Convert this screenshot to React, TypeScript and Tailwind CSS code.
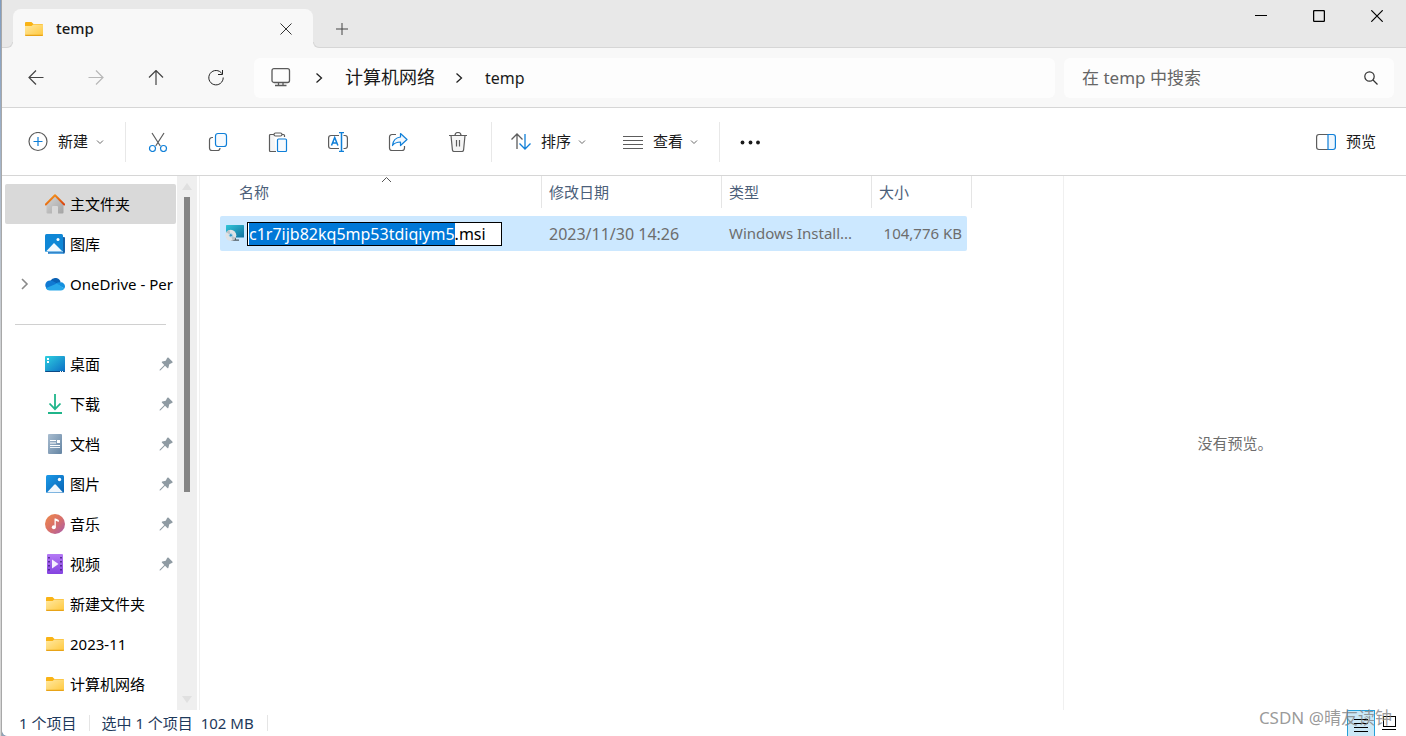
import React, { useEffect, useRef, useState } from 'react';

const FolderIcon = () => (
  <svg width="20" height="20" viewBox="0 0 20 20">
    <defs>
      <linearGradient id="folder" x1="0" y1="0" x2="1" y2="1">
        <stop offset="0" stopColor="#ffe9a3" />
        <stop offset="1" stopColor="#ffc83d" />
      </linearGradient>
    </defs>
    <path d="M1 4a1 1 0 0 1 1-1h5.500l2 2H18a1 1 0 0 1 1 1v5H1z" fill="#f9b316" />
    <path d="M1 7h6.500l1.800-1.500H19V16a1 1 0 0 1-1 1H2a1 1 0 0 1-1-1z" fill="url(#folder)" />
    <path d="M1 15.700V16a1 1 0 0 0 1 1h16a1 1 0 0 0 1-1v-.3z" fill="#e8a317" />
  </svg>
);

const HomeIcon = () => (
  <svg width="20" height="20" viewBox="0 0 20 20">
    <defs>
      <linearGradient id="homeBody" x1="0" y1="0" x2="1" y2="1">
        <stop offset="0" stopColor="#d6d6d6" />
        <stop offset="1" stopColor="#a3a3a3" />
      </linearGradient>
      <linearGradient id="homeRoof" x1="0" y1="0" x2="1" y2="1">
        <stop offset="0" stopColor="#f9a01b" />
        <stop offset="1" stopColor="#d8410f" />
      </linearGradient>
    </defs>
    <path d="M10 1.500 1.500 10v8.500a1 1 0 0 0 1 1H7V13a1 1 0 0 1 1-1h4a1 1 0 0 1 1 1v6.500h4.500a1 1 0 0 0 1-1V10z" fill="url(#homeBody)" />
    <path d="M.8 10.500 10 1.300l9.200 9.200" fill="none" stroke="url(#homeRoof)" strokeWidth="2" strokeLinejoin="round" strokeLinecap="round" />
  </svg>
);

const GalleryIcon = () => (
  <svg width="20" height="20" viewBox="0 0 20 20">
    <path d="M3 5v14a1 1 0 0 0 1 1h14a2 2 0 0 0 2-2V4a1 1 0 0 0-1-1z" fill="#1561a8" />
    <path d="M18 3v15H3v-1h14V3z" fill="#fff" />
    <path d="M3 18.500h15l1 1.500H5a2 2 0 0 1-2-1.500z" fill="#58a9e6" />
    <rect width="18" height="18" rx="1.500" fill="#0f87d6" />
    <path d="M1 17.500 9 9l8.500 8.500z" fill="#f2f8fd" />
    <circle cx="13" cy="5.500" r="1.500" fill="#fff" />
  </svg>
);

const CloudIcon = () => (
  <svg width="20" height="20" viewBox="0 0 20 20">
    <path d="M5.500 6.500a5.600 5.600 0 0 1 10.200 2L11 12z" fill="#0b62b5" />
    <path d="M5.500 6.400a4.600 4.600 0 0 1 3 1l5.500 3-8 5.600H4.700A4.800 4.800 0 0 1 5.500 6.400z" fill="#1079d2" />
    <path d="M10.500 9.700a5.300 5.300 0 0 1 5-1.300 4 4 0 0 1 4.500 4 3.900 3.900 0 0 1-.6 2z" fill="#1490df" />
    <path d="m11.800 9.400 7.600 5A3.800 3.800 0 0 1 16 16.500H4.700a4.600 4.600 0 0 1-3.900-2.300z" fill="#28a8ea" />
  </svg>
);

const DesktopIcon = () => (
  <svg width="20" height="20" viewBox="0 0 20 20">
    <defs>
      <linearGradient id="desktop" x1="0" y1="0" x2="1" y2="1">
        <stop offset="0" stopColor="#2fd0e0" />
        <stop offset="1" stopColor="#0b6cc4" />
      </linearGradient>
    </defs>
    <rect y="2" width="20" height="16" rx="1" fill="url(#desktop)" />
    <path d="M0 17h20a1 1 0 0 1-1 1H1a1 1 0 0 1-1-1z" fill="#0c4a86" />
    <path d="M2 4h2v2H2zM2 7h2v2H2zM15 17h1v1h-1zM17 17h1v1h-1z" fill="#fff" />
  </svg>
);

const DownloadIcon = () => (
  <svg width="20" height="20" viewBox="0 0 20 20" fill="none" stroke="#1fb58a" strokeWidth="1.800">
    <path d="M10 0v15M4.500 9.500 10 15.200l5.500-5.700M3 19h14" />
  </svg>
);

const DocumentIcon = () => (
  <svg width="20" height="20" viewBox="0 0 20 20">
    <defs>
      <linearGradient id="doc" x1="0" y1="0" x2="1" y2="1">
        <stop offset="0" stopColor="#a9bdd0" />
        <stop offset="1" stopColor="#6484a3" />
      </linearGradient>
    </defs>
    <rect x="3" width="14" height="20" rx="1" fill="url(#doc)" />
    <path d="M5 6h6v1H5zM5 8.500h6v1H5zM12 6h3v3h-3zM5 11h10v1H5z" fill="#fff" />
    <path d="M5 13h10v1H5z" fill="#eef3f7" />
  </svg>
);

const PicturesIcon = () => (
  <svg width="20" height="20" viewBox="0 0 20 20">
    <defs>
      <linearGradient id="pics" x1="0" y1="0" x2="1" y2="1">
        <stop offset="0" stopColor="#1c9ae8" />
        <stop offset="1" stopColor="#0863b4" />
      </linearGradient>
    </defs>
    <rect x="1" y="1" width="18" height="18" rx="1.500" fill="url(#pics)" />
    <path d="M2 18.500 9.200 10.800a1.200 1.200 0 0 1 1.700 0L18 18.500z" fill="#f0f7fd" />
    <circle cx="14.500" cy="5.500" r="1.700" fill="#fff" />
  </svg>
);

const MusicIcon = () => (
  <svg width="20" height="20" viewBox="0 0 20 20">
    <defs>
      <linearGradient id="music" x1="0" y1="0" x2="1" y2="1">
        <stop offset="0" stopColor="#ee8a4a" />
        <stop offset="0.500" stopColor="#d97068" />
        <stop offset="1" stopColor="#a75cae" />
      </linearGradient>
    </defs>
    <circle cx="10" cy="10" r="10" fill="url(#music)" />
    <circle cx="8.800" cy="13.200" r="2" fill="#fff" />
    <path d="M9.500 13.200V4.500h1.300l3 1.600V8l-3-1.200v6.400z" fill="#fff" />
  </svg>
);

const VideoIcon = () => (
  <svg width="20" height="20" viewBox="0 0 20 20">
    <defs>
      <linearGradient id="video" x1="0" y1="0" x2="0" y2="1">
        <stop offset="0" stopColor="#b57af5" />
        <stop offset="1" stopColor="#8442e0" />
      </linearGradient>
    </defs>
    <rect x="2" width="16" height="20" rx="1" fill="url(#video)" />
    <path d="M4 3v15M16 3v15" stroke="#3e1a78" strokeWidth="1.500" strokeDasharray="1.500 2.500" />
    <path d="M7 5.500v9l6.500-4.500z" fill="#f6f0fe" />
  </svg>
);

const PinIcon = () => (
  <svg width="14" height="14" viewBox="0 0 14 14" fill="#8f9ba3">
    <path d="M8 1.200C8.300.4 9 .2 9.600.8l3.700 3.600c.6.6.4 1.300-.4 1.600l-2.600 1.300-.9 3.400c-.2.600-.7.700-1.100.3L6 8.700l-4.700 4.700H.6v-.7L5.300 8 3 5.700c-.4-.4-.3-.9.3-1.100l3.400-.9z" />
  </svg>
);

const InstallerIcon = () => (
  <svg width="20" height="20" viewBox="0 0 20 20">
    <defs>
      <linearGradient id="screen" x1="0" y1="0" x2="1" y2="1">
        <stop offset="0" stopColor="#33c6d8" />
        <stop offset="1" stopColor="#0f6f9f" />
      </linearGradient>
    </defs>
    <rect x="1" y="1" width="18" height="12.500" rx=".5" fill="url(#screen)" />
    <path d="M8 13.500h3v2h3v1.300H6z" fill="#4d5a62" />
    <circle cx="5.800" cy="11.300" r="5.500" fill="#dfe2e5" />
    <path d="M5.800 11.300 1.300 8.300A5.500 5.500 0 0 1 4.300 6zM5.800 11.300l4.800 2.500a5.500 5.500 0 0 1-3 2.700z" fill="#bcc2c7" />
    <circle cx="5.800" cy="11.300" r="1.700" fill="#3296c8" stroke="#b4dcee" />
  </svg>
);

const Caret = () => (
  <svg width="8" height="6" viewBox="0 0 8 6" fill="none" stroke="#6b6b6b">
    <path d="M1 1.500 4 4.500l3-3" />
  </svg>
);

const CrumbArrow = () => (
  <svg width="8" height="12" viewBox="0 0 8 12" fill="none" stroke="#222" strokeWidth="1.300">
    <path d="m1.500 1.500 5 4.500-5 4.500" />
  </svg>
);

// stroke colours of the command bar icons
const ink = '#5c5c5c';
const blue = '#0f7fd8';

const actions = [
  {
    label: '剪切',
    icon: (
      <>
        <path d="M4 1l8.300 13M16 1 7.700 14" stroke={ink} />
        <circle cx="4.500" cy="16.500" r="3" stroke={blue} />
        <circle cx="15.500" cy="16.500" r="3" stroke={blue} />
      </>
    ),
  },
  {
    label: '复制',
    icon: (
      <>
        <path d="M5 5.500H4A2.500 2.500 0 0 0 1.500 8v8A2.500 2.500 0 0 0 4 18.500h5.500A2.500 2.500 0 0 0 12 16" stroke={ink} />
        <rect x="7.500" y="1.500" width="11" height="13" rx="2.500" fill="#f6fafe" stroke={blue} />
      </>
    ),
  },
  {
    label: '粘贴',
    icon: (
      <>
        <path d="M6 2.500H2.500a1 1 0 0 0-1 1v15a1 1 0 0 0 1 1H8M14 2.500h1.500a1 1 0 0 1 1 1V5" fill="#f5f5f5" stroke={ink} />
        <rect x="6" y="1" width="8" height="3" rx="1.500" fill="#fff" stroke={ink} />
        <rect x="9.500" y="7" width="9" height="12.500" rx="1" fill="#f6fafe" stroke={blue} />
      </>
    ),
  },
  {
    label: '重命名',
    icon: (
      <>
        <path d="M11 3.500H3A2.500 2.500 0 0 0 .6 6v8A2.500 2.500 0 0 0 3 16.500h8M15.500 3.500H17A2.500 2.500 0 0 1 19.400 6v8a2.500 2.500 0 0 1-2.400 2.500h-1.500" stroke={ink} />
        <path d="m3.500 13.500 3.200-8 3.200 8M4.700 11h4" stroke={blue} strokeWidth="1.500" />
        <path d="M13.500 1v18M11 .6h5M11 19.400h5" stroke={blue} strokeWidth="1.500" />
      </>
    ),
  },
  {
    label: '共享',
    icon: (
      <>
        <path d="M8 2.500H4A2.500 2.500 0 0 0 1.500 5v11A2.500 2.500 0 0 0 4 18.500h10a2.500 2.500 0 0 0 2.500-2.500v-2" stroke={ink} />
        <path d="M12.500 1.500 19 7.500l-6.500 6V10C9 10 6.500 11 4.500 13.500 5 8.500 8 5.500 12.500 5z" fill="#f2f8fe" stroke={blue} strokeLinejoin="round" />
      </>
    ),
  },
  {
    label: '删除',
    icon: (
      <>
        <path d="M3 3.500l1.400 14.300a2 2 0 0 0 2 1.700h7.200a2 2 0 0 0 2-1.700L17 3.500z" fill="#f5f5f5" />
        <path d="M1 3.500h18M3 3.500l1.400 14.300a2 2 0 0 0 2 1.700h7.200a2 2 0 0 0 2-1.700L17 3.500M7 3.500a3 3 0 0 1 6 0M8.500 8v6.500M11.500 8v6.500" stroke={ink} />
      </>
    ),
  },
];

const places = [
  { label: '桌面', icon: <DesktopIcon />, pinned: true },
  { label: '下载', icon: <DownloadIcon />, pinned: true },
  { label: '文档', icon: <DocumentIcon />, pinned: true },
  { label: '图片', icon: <PicturesIcon />, pinned: true },
  { label: '音乐', icon: <MusicIcon />, pinned: true },
  { label: '视频', icon: <VideoIcon />, pinned: true },
  { label: '新建文件夹', icon: <FolderIcon />, pinned: false },
  { label: '2023-11', icon: <FolderIcon />, pinned: false },
  { label: '计算机网络', icon: <FolderIcon />, pinned: false },
];

function TitleBar() {
  return (
    <header className="flex h-12 shrink-0 justify-between border-b border-[#d6d6d6] bg-[#e8e8e8]">
      <div className="flex pl-[11px]">
        <div className="relative mt-[9px] -mb-px flex w-[300px] items-center rounded-t-lg bg-[#f8f8f8] pr-[15px] pl-[11px]">
          <span className="absolute bottom-0 -left-1.5 size-1.5 bg-[#f8f8f8]">
            <span className="block size-full rounded-br-md border-r border-b border-[#d6d6d6] bg-[#e8e8e8]" />
          </span>
          <span className="absolute -right-1.5 bottom-0 size-1.5 bg-[#f8f8f8]">
            <span className="block size-full rounded-bl-md border-b border-l border-[#d6d6d6] bg-[#e8e8e8]" />
          </span>
          <FolderIcon />
          <span className="ml-3 flex-1 text-[15px] font-medium">temp</span>
          <button aria-label="关闭标签页" className="flex size-6 items-center justify-center">
            <svg width="12" height="12" viewBox="0 0 12 12" stroke="#333">
              <path d="m.5.5 11 11M11.500.5l-11 11" />
            </svg>
          </button>
        </div>
        <button aria-label="新建标签页" className="mt-[10px] flex w-[58px] items-center justify-center">
          <svg width="12" height="12" viewBox="0 0 12 12" stroke="#444">
            <path d="M6 0v12M0 6h12" />
          </svg>
        </button>
      </div>
      <div className="flex h-8">
        <button aria-label="最小化" className="flex w-[58px] items-center justify-center">
          <svg width="12" height="12" viewBox="0 0 12 12" stroke="#000">
            <path d="M0 5.500h12" />
          </svg>
        </button>
        <button aria-label="最大化" className="flex w-[58px] items-center justify-center">
          <svg width="12" height="12" viewBox="0 0 12 12" fill="none" stroke="#000" strokeWidth="1.300">
            <rect x=".6" y=".6" width="10.800" height="10.800" rx="1" />
          </svg>
        </button>
        <button aria-label="关闭" className="flex w-[58px] items-center justify-center">
          <svg width="12" height="12" viewBox="0 0 12 12" stroke="#000" strokeWidth="1.200">
            <path d="m.3.3 11.400 11.400M11.700.3.3 11.700" />
          </svg>
        </button>
      </div>
    </header>
  );
}

function NavBar() {
  return (
    <nav className="flex h-[60px] shrink-0 items-center border-b border-[#d6d6d6] bg-[#f8f8f8] pr-3 pl-1">
      <button aria-label="后退" className="flex w-[60px] justify-center">
        <svg width="16" height="16" viewBox="0 0 16 16" fill="none" stroke="#444" strokeWidth="1.200">
          <path d="M15.500 7.500H1M8 .5l-7 7 7 7" />
        </svg>
      </button>
      <button aria-label="前进" className="flex w-[60px] justify-center">
        <svg width="16" height="16" viewBox="0 0 16 16" fill="none" stroke="#b8b8b8" strokeWidth="1.200">
          <path d="M.5 7.500H15M8 .5l7 7-7 7" />
        </svg>
      </button>
      <button aria-label="向上" className="flex w-[60px] justify-center">
        <svg width="16" height="16" viewBox="0 0 16 16" fill="none" stroke="#444" strokeWidth="1.200">
          <path d="M8 15V.5M1 7.500l7-7 7 7" />
        </svg>
      </button>
      <button aria-label="刷新" className="flex w-[60px] justify-center">
        <svg width="16" height="16" viewBox="0 0 16 16" fill="none" stroke="#222">
          <path d="M14 3.700A7.200 7.200 0 1 0 15.200 7.500M14.500 0v4.500H10" />
        </svg>
      </button>
      <div className="ml-2 flex h-10 min-w-0 flex-1 items-center rounded-md bg-[#fdfdfd] pl-[17px] text-[#1a1a1a]">
        <svg width="20" height="20" viewBox="0 0 20 20" fill="none" stroke="#5a5a5a" strokeWidth="1.300">
          <rect x="1" y=".7" width="17.500" height="13.800" rx="2" />
          <path d="M7.500 14.500v3M12 14.500v3M4 17.500h11.500" />
        </svg>
        <span className="ml-6"><CrumbArrow /></span>
        <a href="#network" className="ml-[22px] text-[18px]">计算机网络</a>
        <span className="ml-5"><CrumbArrow /></span>
        <a href="#temp" className="ml-[22px] text-[16px]">temp</a>
      </div>
      <div className="ml-[9px] flex h-10 w-[330px] items-center rounded-md bg-[#fdfdfd] pr-4 pl-[18px]">
        <input
          type="search"
          aria-label="搜索"
          placeholder="在 temp 中搜索"
          className="min-w-0 flex-1 bg-transparent text-[17px] outline-none placeholder:text-[#666]"
        />
        <svg width="14" height="14" viewBox="0 0 14 14" fill="none" stroke="#333" strokeWidth="1.200">
          <circle cx="5.500" cy="5.500" r="4.700" />
          <path d="m9 9 4.500 4.500" />
        </svg>
      </div>
    </nav>
  );
}

function CommandBar() {
  return (
    <div className="flex h-[68px] shrink-0 items-center border-b border-[#d6d6d6] bg-white pr-[30px] pl-[26px] text-[15px]">
      <button className="flex items-center">
        <svg width="20" height="20" viewBox="0 0 20 20" fill="none" strokeWidth="1.200">
          <circle cx="10" cy="9.500" r="9" stroke={ink} />
          <path d="M10 5v9M5.500 9.500h9" stroke={blue} />
        </svg>
        <span className="mr-2 ml-[10px]">新建</span>
        <Caret />
      </button>
      <span className="ml-[21px] h-10 w-px bg-[#e8e8e8]" />
      <div className="ml-0.5 flex">
        {actions.map((action) => (
          <button key={action.label} aria-label={action.label} className="flex w-[60px] justify-center">
            <svg width="20" height="20" viewBox="0 0 20 20" fill="none" strokeWidth="1.200">
              {action.icon}
            </svg>
          </button>
        ))}
      </div>
      <span className="ml-[3px] h-10 w-px bg-[#e8e8e8]" />
      <button className="ml-[19px] flex items-center">
        <svg width="20" height="20" viewBox="0 0 20 20" fill="none" strokeWidth="1.300">
          <path d="M6 17V2M.5 7.500 6 2l5.500 5.500" stroke={ink} />
          <path d="M14 2v15M8.500 11.500 14 17l5.500-5.500" stroke={blue} />
        </svg>
        <span className="mr-[7px] ml-[10px]">排序</span>
        <Caret />
      </button>
      <button className="ml-[37px] flex items-center">
        <svg width="20" height="20" viewBox="0 0 20 20" stroke={ink} strokeWidth="1.200">
          <path d="M0 4.500h20M0 8.500h20M0 12.500h20M0 16.500h20" />
        </svg>
        <span className="mr-[7px] ml-[10px]">查看</span>
        <Caret />
      </button>
      <span className="ml-[21px] h-10 w-px bg-[#e8e8e8]" />
      <button aria-label="查看更多" className="ml-5">
        <svg width="20" height="20" viewBox="0 0 20 20" fill="#1a1a1a">
          <circle cx="2.500" cy="10.500" r="1.900" />
          <circle cx="10.500" cy="10.500" r="1.900" />
          <circle cx="18" cy="10.500" r="1.900" />
        </svg>
      </button>
      <button className="ml-auto flex items-center gap-[10px]">
        <svg width="20" height="20" viewBox="0 0 20 20" fill="none" strokeWidth="1.200">
          <path d="M12 2.500H3A2.500 2.500 0 0 0 .6 5v10A2.500 2.500 0 0 0 3 17.500h9" stroke={ink} />
          <path d="M12 2.500h5A2.500 2.500 0 0 1 19.400 5v10a2.500 2.500 0 0 1-2.400 2.500h-5z" fill="#eef6fd" stroke={blue} />
        </svg>
        预览
      </button>
    </div>
  );
}

function Sidebar() {
  return (
    <aside className="flex w-[198px] shrink-0 border-r border-[#f0f0f0]">
      <ul className="w-[175px] py-2 pr-px pl-[3px] text-[15px] text-black">
        <li>
          <a href="#home" className="flex h-10 items-center gap-[5px] rounded-xs bg-[#d9d9d9] pl-10">
            <HomeIcon />主文件夹
          </a>
        </li>
        <li>
          <a href="#gallery" className="flex h-10 items-center gap-[5px] pl-10">
            <GalleryIcon />图库
          </a>
        </li>
        <li className="flex h-10 items-center overflow-hidden">
          <button aria-label="展开 OneDrive" className="flex w-10 shrink-0 justify-center">
            <svg width="8" height="12" viewBox="0 0 8 12" fill="none" stroke="#8a8a8a" strokeWidth="1.600">
              <path d="m1 1 5 5-5 5" />
            </svg>
          </button>
          <a href="#onedrive" className="flex shrink-0 items-center gap-[5px] whitespace-nowrap">
            <CloudIcon />OneDrive - Per
          </a>
        </li>
        <li className="flex h-10 items-center px-[10px]">
          <hr className="w-full border-[#d0d0d0]" />
        </li>
        {places.map((place) => (
          <li key={place.label}>
            <a href="#place" className="flex h-10 items-center gap-[5px] pr-[3px] pl-10">
              {place.icon}
              <span className="flex-1 whitespace-nowrap">{place.label}</span>
              {place.pinned && <PinIcon />}
            </a>
          </li>
        ))}
      </ul>
      <div className="flex w-5 flex-col items-center justify-between bg-[#efefef] py-[7px]">
        <div className="flex flex-col items-center gap-[7px]">
          <svg width="10" height="7" viewBox="0 0 10 7" fill="#e0e0e0">
            <path d="M5 0 10 7H0z" />
          </svg>
          <div className="h-[295px] w-1.5 bg-[#858585]" />
        </div>
        <svg width="10" height="7" viewBox="0 0 10 7" fill="#e0e0e0">
          <path d="M0 0h10L5 7z" />
        </svg>
      </div>
    </aside>
  );
}

function FileList() {
  const [name, setName] = useState('c1r7ijb82kq5mp53tdiqiym5.msi');
  const inputRef = useRef<HTMLInputElement>(null);

  // select the base name only, the extension stays out
  useEffect(() => {
    const el = inputRef.current;
    if (!el) return;
    el.focus();
    el.setSelectionRange(0, el.value.lastIndexOf('.'));
  }, []);

  return (
    <main className="min-w-0 flex-1 pl-5">
      <table className="w-[752px] table-fixed border-separate border-spacing-0 text-left">
        <thead className="text-[15px] text-[#4c607a]">
          <tr className="h-8">
            <th className="relative w-[322px] border-r border-[#e5e5e5] pl-[19px] font-normal">
              名称
              <svg className="absolute top-0 left-1/2" width="12" height="7" viewBox="0 0 12 7" fill="none" stroke="#555">
                <path d="M1 6 5.500 1.500 10 6" />
              </svg>
            </th>
            <th className="w-[180px] border-r border-[#e5e5e5] pl-[7px] font-normal">修改日期</th>
            <th className="w-[150px] border-r border-[#e5e5e5] pl-[7px] font-normal">类型</th>
            <th className="w-[100px] border-r border-[#e5e5e5] pl-[7px] font-normal">大小</th>
          </tr>
        </thead>
        <tbody className="text-[15px] text-[#6d6d6d]">
          <tr>
            <td className="px-0 pt-2">
              <div className="flex h-[35px] items-center gap-0.5 rounded-l-xs bg-[#cce8ff] pl-[5px]">
                <InstallerIcon />
                <input
                  ref={inputRef}
                  aria-label="文件名"
                  value={name}
                  onChange={(e) => setName(e.target.value)}
                  className="h-6 w-[255px] border border-black bg-white px-px text-[16px] text-black outline-none selection:bg-[#0078d7] selection:text-white"
                />
              </div>
            </td>
            <td className="px-0 pt-2">
              <div className="flex h-[35px] items-center bg-[#cce8ff] pl-[7px] text-[16px]">2023/11/30 14:26</div>
            </td>
            <td className="px-0 pt-2">
              <div className="flex h-[35px] items-center bg-[#cce8ff] pl-[7px]">Windows Install...</div>
            </td>
            <td className="pt-2 pr-[5px] pl-0">
              <div className="flex h-[35px] items-center justify-end rounded-r-xs bg-[#cce8ff] pr-[5px]">104,776 KB</div>
            </td>
          </tr>
        </tbody>
      </table>
    </main>
  );
}

function StatusBar() {
  return (
    <footer className="relative flex h-[26px] shrink-0 items-center bg-white pr-[3px] pl-[17px] text-[15px] text-[#1e395b]">
      <span>1 个项目</span>
      <span className="mr-[11px] ml-[13px] h-4 w-px bg-[#e5e5e5]" />
      <span className="whitespace-pre">选中 1 个项目  102 MB</span>
      <span className="ml-[13px] h-4 w-px bg-[#e5e5e5]" />
      <div className="ml-auto flex h-full">
        <button aria-label="详细信息" className="flex w-7 items-center justify-center border border-b-0 border-[#26a0da] bg-[#cbe8f6]">
          <svg width="14" height="16" viewBox="0 0 14 16" stroke="#000">
            <path d="M0 3.500h14M0 7.500h14M0 11.500h14M0 15.500h14" />
          </svg>
        </button>
        <button aria-label="大缩略图" className="flex w-7 items-center justify-center">
          <svg width="14" height="14" viewBox="0 0 14 14" fill="none" stroke="#000">
            <rect x="1.500" y=".5" width="12" height="10" />
            <path d="M0 13.500h14" />
          </svg>
        </button>
      </div>
      <span className="pointer-events-none absolute right-[14px] bottom-1.5 text-[17px] whitespace-nowrap text-[#808080]/80">CSDN @晴友读钟</span>
    </footer>
  );
}

export default function App() {
  return (
    <div className="flex h-screen bg-[#8fa3ba] font-['Noto_Sans','Noto_Sans_CJK_SC',sans-serif] text-[#1a1a1a]">
      <div className="w-0.5 shrink-0 border-r border-[#a8a8a8] bg-gradient-to-b from-[#7f9cc0] via-[#d5d5d5] to-[#d5d5d5]" />
      <div className="flex min-w-0 flex-1 flex-col overflow-hidden rounded-bl-md bg-white">
        <TitleBar />
        <NavBar />
        <CommandBar />
        <div className="flex min-h-0 flex-1 overflow-hidden">
          <Sidebar />
          <FileList />
          <section aria-label="预览" className="flex w-[343px] shrink-0 items-center justify-center border-l border-[#f0f0f0] text-[15px] text-[#6d6d6d]">
            没有预览。
          </section>
        </div>
        <StatusBar />
      </div>
    </div>
  );
}
